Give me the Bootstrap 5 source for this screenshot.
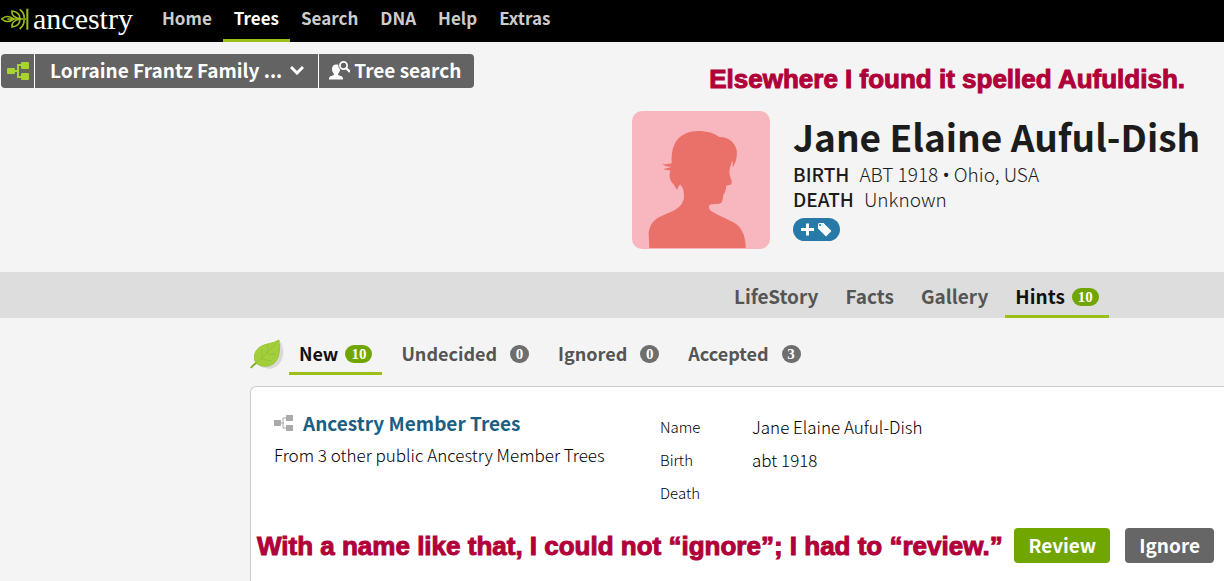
<!DOCTYPE html>
<html lang="en">
<head>
<meta charset="utf-8">
<meta name="viewport" content="width=device-width, initial-scale=1">
<title>Jane Elaine Auful-Dish - Hints</title>
<link href="https://cdn.jsdelivr.net/npm/bootstrap@5.3.0/dist/css/bootstrap.min.css" rel="stylesheet">
<style>
  body { background: #f4f4f4; color: #1c1c1c; font-family: "Noto Sans CJK SC", "Open Sans", sans-serif; overflow-x: hidden; }
  a { text-decoration: none; }
  .topbar { background: #000; height: 42px; }
  .brand { color: #fff; font: 30px/34px "Liberation Serif", serif; padding: 0 0 5px 1px; width: 151px; gap: 3px; }
  .brand:hover { color: #fff; }
  .topbar .nav-link { color: #ccc; font-size: 17px; font-weight: 700; line-height: 36px; padding: 0 11px 3px; border-bottom: 3px solid transparent; }
  .topbar .nav-link.active { color: #fff; border-color: #9cbe1b; }
  .toolbar { padding: 12px 39px 0 1px; height: 46px; }
  .tree-tools .btn { background: #636363; color: #fff; border: 0; border-radius: 4px; font-size: 19px; font-weight: 700; line-height: 32px; height: 34px; padding: 0 15px 2px; white-space: nowrap; }
  .tree-tools .btn + .btn { border-left: 1px solid #fff; margin-left: 0; }
  .tree-tools .btn.tree-icon { padding: 0 6px; }
  .tree-tools .btn.tree-search { padding-left: 10px; padding-right: 13px; }
  .note { color: #b10039; font: 700 26px/34px "Liberation Sans", sans-serif; -webkit-text-stroke: 1px #b10039; white-space: nowrap; min-width: 0; }
  .person { padding: 23px 0 23px 632px; gap: 23px; }
  .avatar { width: 138px; height: 138px; border-radius: 10px; background: #f8b6be; }
  .person h1 { font-size: 37px; font-weight: 700; line-height: 50px; white-space: nowrap; margin: 0; }
  .vital { font-size: 19px; font-weight: 300; line-height: 25px; gap: 10px; }
  .vital dt { font-weight: 500; }
  .bullet { font: 19px/10px "Open Sans", sans-serif; }
  .tag-btn { background: #2779a8; border: 0; border-radius: 12px; width: 47px; height: 23px; margin-top: 7px; }
  .person-tabs { background: #ddd; height: 46px; padding-left: 724px; gap: 7px; }
  .hint-tabs { height: 40px; margin: 17px 0 11px 250px; }
  .tab { color: #555; font-weight: 700; padding: 0 10px; border-bottom: 3px solid transparent; white-space: nowrap; }
  .person-tabs .tab { font-size: 19px; line-height: 48px; height: 46px; }
  .hint-tabs .tab { font-size: 18px; line-height: 36px; height: 40px; }
  .hint-tabs .tab + .tab { margin-left: 9px; }
  .tab.active { color: #111; border-color: #9cbe1b; }
  .count { display: inline-block; background: #6e6e6e; color: #fff; border-radius: 9px; min-width: 19px; height: 18px; padding: 0 6px; font: 700 15px/18px "Liberation Serif", serif; text-align: center; vertical-align: 2px; margin-left: 7px; }
  .active .count { background: #71a500; }
  .hint-tabs .tab:not(.active) .count { margin-left: 13px; }
  .hint-card { background: #fff; border: 1px solid #ccc; border-radius: 6px 0 0 0; border-right: 0; border-bottom: 0; margin-left: 250px; padding: 20px 10px 17px 6px; min-height: calc(100vh - 386px); }
  .hint-body { padding-left: 17px; min-height: 121px; }
  .hint-source { width: 386px; }
  .hint-source h2 { font-size: 19px; font-weight: 700; line-height: 32px; margin: 0; gap: 10px; }
  .hint-source h2 a { color: #1b5e83; }
  .hint-source p { font-size: 17px; font-weight: 300; line-height: 32px; margin: 0; color: #000; }
  .fact-list { font-size: 17px; color: #000; padding-top: 3px; }
  .fact-list th { width: 92px; font-size: 15px; font-weight: 300; }
  .fact-list td { font-weight: 300; }
  .fact-list th, .fact-list td { height: 33px; line-height: 33px; padding: 0; }
  .hint-actions { gap: 15px; }
  .hint-actions .btn { flex-shrink: 0; border: 0; border-radius: 4px; color: #fff; font-size: 19px; font-weight: 700; line-height: 33px; height: 35px; padding: 0 14px 2px; }
  .btn-review { background: #71a500; }
  .btn-ignore { background: #666; }
</style>
</head>
<body>
<header class="topbar d-flex">
  <a class="brand d-flex align-items-center" href="#" aria-label="ancestry">
    <svg width="29" height="24" viewBox="5 22 87 72" fill="none" stroke="#9cbe1b" stroke-width="5">
      <path d="M84 27V90" stroke-width="6"/>
      <path d="M7 58Q24 43 43 58Q24 73 7 58ZM24 58H80"/>
      <path d="M38 34C36 46 46 55 62 57C62 44 54 36 38 34ZM38 82C36 70 46 61 62 58C62 72 54 80 38 82Z"/>
      <path d="M61 29C68 34 76 42 74 55M61 88C68 82 76 74 74 61"/>
    </svg>
    <span>ancestry</span>
  </a>
  <nav class="nav flex-nowrap">
    <a class="nav-link" href="#">Home</a>
    <a class="nav-link active" href="#" aria-current="page">Trees</a>
    <a class="nav-link" href="#">Search</a>
    <a class="nav-link" href="#">DNA</a>
    <a class="nav-link" href="#">Help</a>
    <a class="nav-link" href="#">Extras</a>
  </nav>
</header>

<div class="toolbar d-flex align-items-start">
  <div class="btn-group tree-tools">
    <button type="button" class="btn tree-icon d-flex align-items-center" aria-label="Family tree view">
      <svg width="22" height="20" viewBox="0 0 22 20" fill="#a9d32f"><rect y="7" width="8" height="6" rx="1"/><rect x="14" y="1" width="8" height="7" rx="1"/><rect x="14" y="12" width="8" height="7" rx="1"/><path d="M8 10h3M14 4h-3v12h3" fill="none" stroke="#a9d32f" stroke-width="2"/></svg>
    </button>
    <button type="button" class="btn d-flex align-items-center">Lorraine Frantz Family ...
      <svg class="ms-2" width="14" height="10" viewBox="0 0 14 10" fill="none" stroke="#fff" stroke-width="3"><path d="M1 2l6 6 6-6"/></svg>
    </button>
    <button type="button" class="btn tree-search d-flex align-items-center">
      <svg class="me-1" width="21" height="19" viewBox="0 0 21 19" fill="#fff"><path d="M7 3.500C4.500 3.500 3 5.500 3 8c0 2 .7 3.500 1.800 4.500v1.500L1 15.600C.3 16 0 17 0 18.500h14c0-1.500-.3-2.500-1-2.900L9.200 14v-1.500C10.300 11.500 11 10 11 8 9.500 7 9 5.500 9.500 4 8.800 3.600 8 3.500 7 3.500Z"/><circle cx="14.500" cy="4.500" r="3.600" fill="none" stroke="#fff" stroke-width="1.700"/><path d="M17 7l4 4" stroke="#fff" stroke-width="2.400"/></svg>
      Tree search
    </button>
  </div>
  <div class="note ms-auto pt-2">Elsewhere I found it spelled Aufuldish.</div>
</div>

<section class="person d-flex">
  <svg class="avatar flex-shrink-0" viewBox="36 33 414 414" role="img" aria-label="Portrait placeholder">
    <path fill="#ea7169" d="M88 444L86 400C88 375 100 360 120 350L160 332C180 322 190 310 192 290C192 270 188 258 180 254C175 258 173 264 172 270C166 262 164 258 162 254C152 246 146 232 150 216L152 212C144 211 138 210 130 208C138 204 148 203 153 202L152 200C140 200 132 196 127 191C138 194 146 192 155 190C154 170 155 150 164 132C176 105 205 93 235 93C260 93 285 100 297 111C325 110 345 128 350 150C353 170 347 190 338 202C338 195 339 188 337 182C334 190 330 200 329 210C327 222 330 228 334 240C337 248 334 252 332 254C326 256 320 255 318 258C319 264 318 268 316 272C316 278 312 280 310 284C309 292 309 300 304 308C298 314 280 310 270 314C264 318 268 328 272 332C290 345 320 355 345 370C368 385 378 415 377 444Z"/>
  </svg>
  <div>
    <h1>Jane Elaine Auful-Dish</h1>
    <dl class="m-0">
      <div class="vital d-flex"><dt>BIRTH</dt><dd class="m-0">ABT 1918 <span class="bullet">•</span> Ohio, USA</dd></div>
      <div class="vital d-flex"><dt>DEATH</dt><dd class="m-0">Unknown</dd></div>
    </dl>
    <button type="button" class="tag-btn d-flex align-items-center justify-content-center p-0" aria-label="Add tag">
      <svg width="31" height="15" viewBox="0 0 31 15" fill="#fff"><path d="M5 1.500h3v4.500h5v3H8v4.500H5V9H0V6h5Z"/><path fill-rule="evenodd" d="M17 2.500Q17 1 18.500 1h4L30 8.500Q30.500 9 30 9.500L25.500 14Q25 14.500 24.500 14L17 6.500ZM19 2a1 1 0 1 0 .1 2A1 1 0 0 0 19 2Z"/></svg>
    </button>
  </div>
</section>

<nav class="person-tabs d-flex" aria-label="Person pages">
  <a class="tab" href="#">LifeStory</a>
  <a class="tab" href="#">Facts</a>
  <a class="tab" href="#">Gallery</a>
  <a class="tab active" href="#" aria-current="page">Hints<span class="count">10</span></a>
</nav>

<main>
  <nav class="hint-tabs d-flex" aria-label="Hint status">
    <svg class="flex-shrink-0 align-self-end mb-1 me-1" width="35" height="32" viewBox="0 0 35 32">
      <path fill="#d9d9d9" d="M31 3C36 14 33 27 20 30L10 28Z"/>
      <path fill="#a4cf3c" stroke="#98c534" d="M29 1C30 10 30 20 23 25C17 29 9 27 6 24C3 19 4 12 10 8C16 4 23 5 29 1Z"/>
      <path fill="none" stroke="#7fae28" stroke-width="2" d="M1 29C2 27 4 26 6 24"/>
      <path fill="none" stroke="#90bf30" stroke-width=".8" d="M6 24Q17 15 28 2M12 19L12 10M17 14L18 7M11 20L22 22M17 15L26 15"/>
    </svg>
    <a class="tab active" href="#" aria-current="true">New<span class="count">10</span></a>
    <a class="tab" href="#">Undecided<span class="count px-0">0</span></a>
    <a class="tab" href="#">Ignored<span class="count px-0">0</span></a>
    <a class="tab" href="#">Accepted<span class="count px-0">3</span></a>
  </nav>

  <article class="hint-card">
    <div class="hint-body d-flex">
      <div class="hint-source flex-shrink-0">
        <h2 class="d-flex align-items-center">
          <svg width="19" height="18" viewBox="0 0 19 18" fill="#aaa"><rect y="6" width="7" height="6"/><rect x="12" y="1" width="7" height="6"/><rect x="12" y="11" width="7" height="6"/><path d="M7 9h3M12 4h-3v10h3" fill="none" stroke="#aaa"/></svg>
          <a href="#">Ancestry Member Trees</a>
        </h2>
        <p>From 3 other public Ancestry Member Trees</p>
      </div>
      <div class="fact-list">
        <table>
          <tr><th scope="row">Name</th><td>Jane Elaine Auful-Dish</td></tr>
          <tr><th scope="row">Birth</th><td>abt 1918</td></tr>
          <tr><th scope="row">Death</th><td></td></tr>
        </table>
      </div>
    </div>
    <div class="hint-actions d-flex align-items-center">
      <div class="note me-auto">With a name like that, I could not “ignore”; I had to “review.”</div>
      <button type="button" class="btn btn-review">Review</button>
      <button type="button" class="btn btn-ignore">Ignore</button>
    </div>
  </article>
</main>
<script src="https://cdn.jsdelivr.net/npm/bootstrap@5.3.0/dist/js/bootstrap.bundle.min.js"></script>
</body>
</html>
